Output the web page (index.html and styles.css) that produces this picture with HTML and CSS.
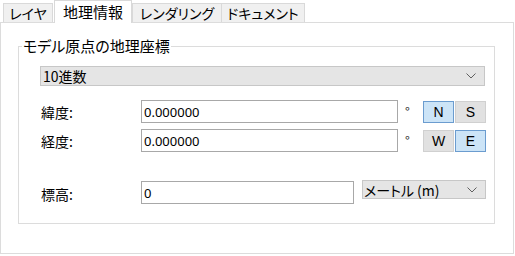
FILE: index.html
```html
<!DOCTYPE html>
<html lang="ja">
<head>
    <meta charset="UTF-8">
    <title>地理情報</title>
    <link rel="stylesheet" href="styles.css">
</head>
<body>
    <div class="tabs">
        <div class="tab t1">レイヤ</div>
        <div class="tab t2 active">地理情報</div>
        <div class="tab t3">レンダリング</div>
        <div class="tab t4">ドキュメント</div>
    </div>
    <div class="panel">
        <fieldset class="group">
            <legend>モデル原点の地理座標</legend>
            <div class="combo wide">
                <span>10進数</span>
                <svg class="chev" width="10" height="6" viewBox="0 0 10 6"><path d="M0.5 0.5 L5 5 L9.5 0.5" fill="none" stroke="#606060" stroke-width="1"/></svg>
            </div>
            <div class="row first">
                <label class="lbl">緯度:</label>
                <input class="field" type="text" value="0.000000">
                <span class="deg">°</span>
                <div class="toggle">
                    <button class="on">N</button>
                    <button>S</button>
                </div>
            </div>
            <div class="row">
                <label class="lbl">経度:</label>
                <input class="field" type="text" value="0.000000">
                <span class="deg">°</span>
                <div class="toggle">
                    <button>W</button>
                    <button class="on">E</button>
                </div>
            </div>
            <div class="row elev">
                <label class="lbl">標高:</label>
                <input class="field short" type="text" value="0">
                <div class="combo unit">
                    <span>メートル (m)</span>
                    <svg class="chev" width="10" height="6" viewBox="0 0 10 6"><path d="M0.5 0.5 L5 5 L9.5 0.5" fill="none" stroke="#606060" stroke-width="1"/></svg>
                </div>
            </div>
        </fieldset>
    </div>
</body>
</html>
```

FILE: styles.css
```css
body {
    margin: 0;
    background-color: #ffffff;
    font-family: "Noto Sans CJK JP", sans-serif;
    font-size: 14px;
    color: #000000;
    font-feature-settings: "palt";
}

.tabs {
    display: flex;
    align-items: flex-end;
    height: 22px;
    padding-left: 3px;
}

.tab {
    box-sizing: border-box;
    height: 19px;
    line-height: 18px;
    text-align: center;
    background-color: #f0f0f0;
    border: 1px solid #d9d9d9;
    border-bottom: none;
    font-size: 14px;
}

.t1 { width: 50px; }
.t2 { width: 78px; margin-left: 1px; }
.t3 { width: 90px; }
.t4 { width: 84px; margin-left: -1px; }

.tab.active {
    height: 23px;
    line-height: 22px;
    margin-bottom: -1px;
    background-color: #ffffff;
    position: relative;
    z-index: 1;
    font-size: 15px;
}

.panel {
    width: 512px;
    height: 230px;
    border: 1px solid #dcdcdc;
}

.group {
    width: 445px;
    height: 172px;
    margin: 15px 0 0 17px;
    padding: 12px 8px 0 21px;
    border: 1px solid #dcdcdc;
}

.group legend {
    padding: 0 1px;
    margin-left: -18px;
    font-size: 15px;
    line-height: 16px;
}

.combo {
    display: flex;
    align-items: center;
    justify-content: space-between;
    box-sizing: border-box;
    background-color: #e5e5e5;
    border: 1px solid #c7c7c7;
    padding: 0 8px 0 2px;
}

.combo.wide {
    width: 445px;
    height: 20px;
}

.combo span {
    line-height: 18px;
}

.row {
    display: flex;
    align-items: center;
    height: 23px;
    margin-top: 6px;
}

.row.first {
    margin-top: 14px;
}

.row.elev {
    margin-top: 29px;
    align-items: flex-start;
}

.lbl {
    width: 100px;
    padding-left: 1px;
}

.row.elev .lbl {
    line-height: 26px;
}

.field {
    box-sizing: border-box;
    width: 257px;
    height: 23px;
    margin: 0;
    padding: 0 2px;
    border: 1px solid #a8a8a8;
    font-family: "Noto Sans", sans-serif;
    font-size: 13px;
    outline: none;
}

.field.short {
    width: 213px;
}

.deg {
    width: 25px;
    padding-left: 7px;
    box-sizing: border-box;
    font-size: 13px;
    color: #333333;
}

.toggle {
    display: flex;
}

.toggle button {
    box-sizing: border-box;
    width: 31px;
    height: 22px;
    margin: 0;
    padding: 0;
    background-color: #e1e1e1;
    border: 1px solid #d0d0d0;
    font-family: "Liberation Sans", sans-serif;
    font-size: 14px;
    color: #000000;
}

.toggle button + button {
    margin-left: 1px;
}

.toggle button.on {
    background-color: #cce4f7;
    border-color: #6b9ccf;
}

.combo.unit {
    width: 124px;
    height: 19px;
    margin-left: 8px;
    margin-top: -1px;
    padding-left: 1px;
}
```
